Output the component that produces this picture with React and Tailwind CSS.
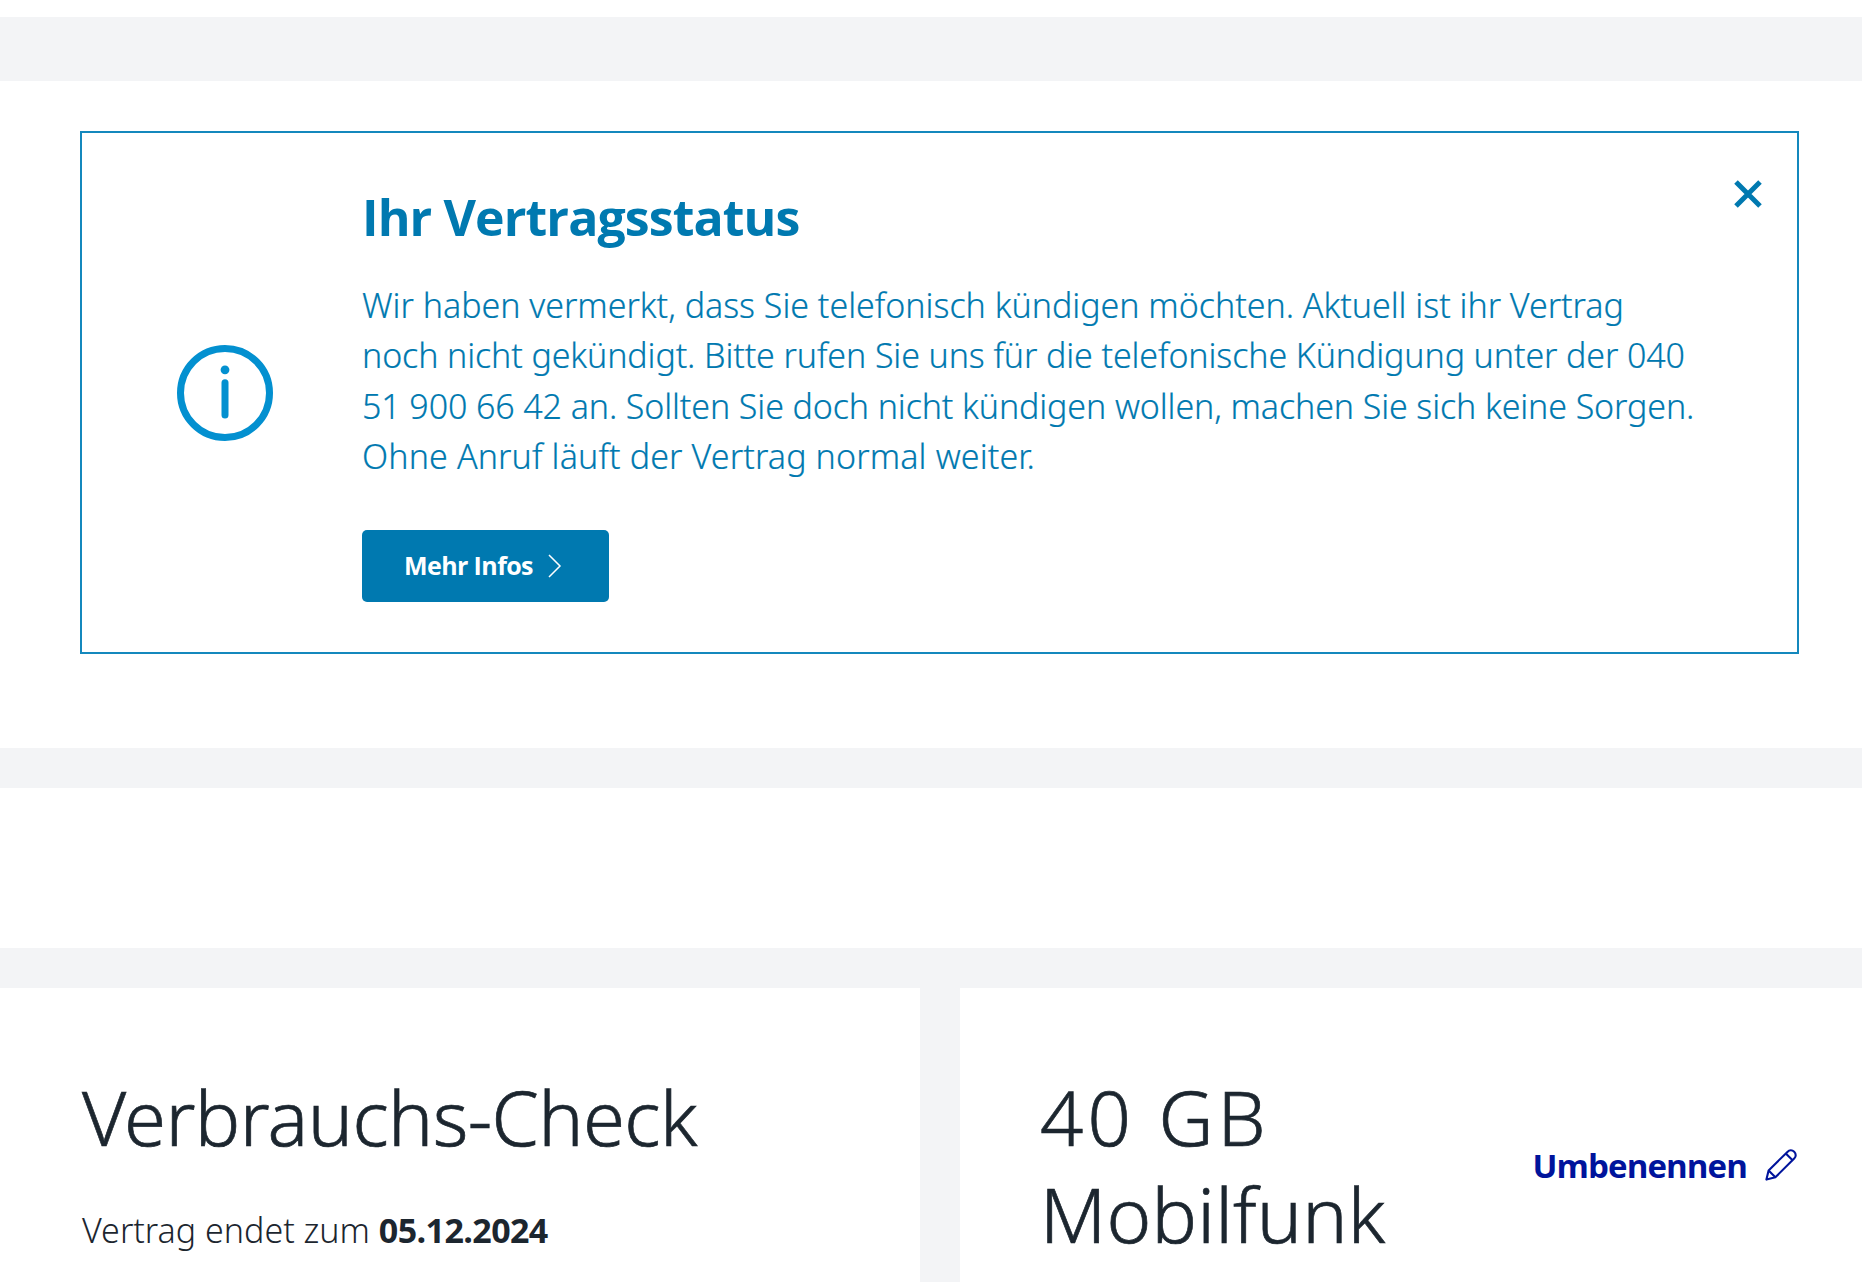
import React from "react";

const InfoIcon = () => (
    <svg width="98" height="98" viewBox="0 0 98 98" fill="none" stroke="#0390d0">
        <circle cx="49" cy="49" r="44.5" strokeWidth="7" />
        <circle cx="49" cy="25.8" r="4.4" fill="#0390d0" stroke="none" />
        <path d="M49 38.7V71" strokeWidth="7" strokeLinecap="round" />
    </svg>
);

const CloseIcon = () => (
    <svg width="28" height="28" viewBox="0 0 28 28" fill="none" stroke="#0079b0">
        <path d="M2 2L26 26M26 2L2 26" strokeWidth="5" />
    </svg>
);

const ChevronIcon = () => (
    <svg width="14" height="24" viewBox="0 0 14 24" fill="none" stroke="#fff">
        <path d="M1 1L12 12L1 23" strokeWidth="1.5" />
    </svg>
);

const PencilIcon = () => (
    <svg
        width="32"
        height="32"
        viewBox="0 0 32 32"
        fill="none"
        stroke="#00149c"
        strokeWidth="2.1"
        strokeLinejoin="round"
    >
        <path d="M1.4 30.6L3.6 21.4L22.4 2.9C24.4 0.9 27.2 0.9 29.2 2.8C31.2 4.7 31.2 7.6 29.2 9.6L10.4 28.2Z" />
        <path d="M3.6 21.4L10.4 28.2M20.8 4.5L27.6 11.2" />
    </svg>
);

const statusLines = [
    {
        text: "Wir haben vermerkt, dass Sie telefonisch kündigen möchten. Aktuell ist ihr Vertrag",
        tracking: "tracking-[-0.02px]",
    },
    {
        text: "noch nicht gekündigt. Bitte rufen Sie uns für die telefonische Kündigung unter der 040",
        tracking: "tracking-[-0.11px]",
    },
    {
        text: "51 900 66 42 an. Sollten Sie doch nicht kündigen wollen, machen Sie sich keine Sorgen.",
        tracking: "tracking-[-0.11px]",
    },
    {
        text: "Ohne Anruf läuft der Vertrag normal weiter.",
        tracking: "tracking-[0.13px]",
    },
];

const StatusNotice = () => (
    <div className="flex h-[523px] w-[1719px] border-2 border-[#1488bd] text-[#0079b0]">
        <div className="flex w-[280px] shrink-0 items-center pl-[94px]">
            <InfoIcon />
        </div>
        <div className="flex-1 pt-[52px]">
            <h2 className="font-['Open_Sans',sans-serif] text-[50px] leading-[64px] font-bold tracking-[-0.9px]">
                Ihr Vertragsstatus
            </h2>
            <p className="mt-[31px] text-[34px] leading-[50.3px] whitespace-nowrap [-webkit-text-stroke:0.2px]">
                {statusLines.map((line) => (
                    <span key={line.text} className={`block ${line.tracking}`}>
                        {line.text}
                    </span>
                ))}
            </p>
            <button className="mt-[49px] flex h-[72px] w-[247px] items-center gap-[15px] rounded-[5px] bg-[#0079b0] pl-[42px] font-['Open_Sans',sans-serif] text-[25px] font-bold tracking-[-0.6px] text-white">
                Mehr Infos
                <ChevronIcon />
            </button>
        </div>
        <button className="mt-[47px] mr-[35px] h-7">
            <CloseIcon />
        </button>
    </div>
);

const App = () => {
    return (
        <div className="h-[1282px] w-[1862px] overflow-hidden bg-[#f3f4f6] font-['Noto_Sans',sans-serif] font-light text-[#1c262f]">
            <div className="h-[17px] bg-white" />
            <section className="mt-16 h-[667px] bg-white pt-[50px] pl-20">
                <StatusNotice />
            </section>
            <div className="mt-10 h-40 bg-white" />
            <div className="mt-10 flex h-[294px] gap-10">
                <section className="w-[920px] bg-white pt-[80px] pl-[82px]">
                    <h1 className="text-[76px] leading-[97px] tracking-[-0.6px] [-webkit-text-stroke:0.7px]">
                        Verbrauchs-Check
                    </h1>
                    <p className="mt-10 text-[34px] leading-[50px] whitespace-nowrap">
                        Vertrag endet zum{" "}
                        <strong className="font-['Open_Sans',sans-serif] font-bold tracking-[-0.6px]">
                            05.12.2024
                        </strong>
                    </p>
                </section>
                <section className="flex flex-1 items-start justify-between bg-white pt-[80px] pr-[65px] pl-[80px]">
                    <h1 className="w-[360px] text-[76px] leading-[97px] [-webkit-text-stroke:0.7px]">
                        <span className="block tracking-[4px]">40 GB</span>
                        <span className="block tracking-[0.2px]">Mobilfunk</span>
                    </h1>
                    <a className="flex h-[194px] items-center gap-[18px] font-['Open_Sans',sans-serif] text-[33px] leading-[50px] font-bold tracking-[-0.9px] text-[#00149c]">
                        <span className="pt-0.5">Umbenennen</span>
                        <PencilIcon />
                    </a>
                </section>
            </div>
        </div>
    );
};

export default App;
